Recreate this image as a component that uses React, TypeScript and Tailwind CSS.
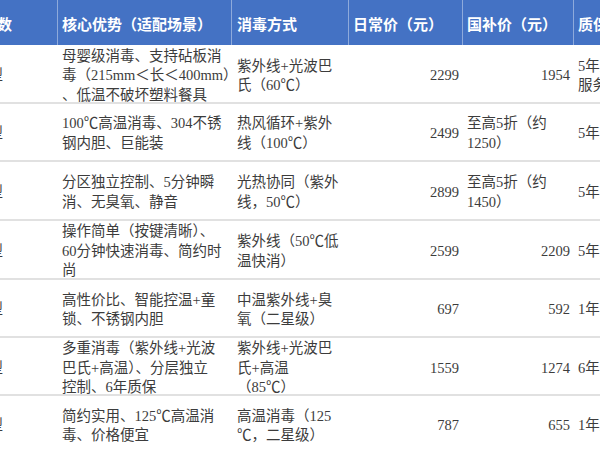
const rows = [
  {
    h: 59,
    pt: 5,
    adv: ['母婴级消毒、支持砧板消', '毒（215mm＜长＜400mm）', '、低温不破坏塑料餐具'],
    mode: ['紫外线+光波巴', '氏（60℃）'],
    daily: '2299',
    sub: '1954',
    warranty: ['5年质保，免费上门', '服务'],
  },
  {
    h: 58,
    pt: 3,
    adv: ['100℃高温消毒、304不锈', '钢内胆、巨能装'],
    mode: ['热风循环+紫外', '线（100℃）'],
    daily: '2499',
    sub: ['至高5折（约', '1250）'],
    warranty: ['5年质保'],
  },
  {
    h: 59,
    pt: 4,
    adv: ['分区独立控制、5分钟瞬', '消、无臭氧、静音'],
    mode: ['光热协同（紫外', '线，50℃）'],
    daily: '2899',
    sub: ['至高5折（约', '1450）'],
    warranty: ['5年质保'],
  },
  {
    h: 59,
    pt: 4,
    adv: ['操作简单（按键清晰）、', '60分钟快速消毒、简约时', '尚'],
    mode: ['紫外线（50℃低', '温快消）'],
    daily: '2599',
    sub: '2209',
    warranty: ['5年质保'],
  },
  {
    h: 58,
    pt: 4,
    adv: ['高性价比、智能控温+童', '锁、不锈钢内胆'],
    mode: ['中温紫外线+臭', '氧（二星级）'],
    daily: '697',
    sub: '592',
    warranty: ['1年质保'],
  },
  {
    h: 58,
    pt: 5,
    adv: ['多重消毒（紫外线+光波', '巴氏+高温）、分层独立', '控制、6年质保'],
    mode: ['紫外线+光波巴', '氏+高温', '（85℃）'],
    daily: '1559',
    sub: '1274',
    warranty: ['6年质保'],
  },
  {
    h: 58,
    pt: 4,
    adv: ['简约实用、125℃高温消', '毒、价格便宜'],
    mode: ['高温消毒（125', '℃，二星级）'],
    daily: '787',
    sub: '655',
    warranty: ['1年质保'],
  },
];

function Lines({ lines }: { lines: string[] }) {
  return (
    <div>
      {lines.map((l, i) => (
        <div key={i} className="whitespace-nowrap">
          {l}
        </div>
      ))}
    </div>
  );
}

export default function App() {
  return (
    <div className="w-[600px] h-[450px] overflow-hidden bg-white font-['Liberation_Serif','Noto_Sans_CJK_SC',serif]">
      <div className="ml-[-60px] w-[760px]">
        <div className="flex h-[45px] bg-[#4472c4] text-white font-bold text-[15px] leading-none">
          <div className="w-[118px] flex items-center pt-[5px] pl-[12px] border-r border-[#8eaadb]">型号参数</div>
          <div className="w-[174px] flex items-center pt-[5px] pl-[4px] border-r border-[#8eaadb]">核心优势（适配场景）</div>
          <div className="w-[117px] flex items-center pt-[5px] pl-[5px] border-r border-[#8eaadb]">消毒方式</div>
          <div className="w-[114px] flex items-center pt-[5px] pl-[4px] border-r border-[#8eaadb]">日常价（元）</div>
          <div className="w-[111px] flex items-center pt-[5px] pl-[4px] border-r border-[#8eaadb]">国补价（元）</div>
          <div className="w-[120px] flex items-center pt-[5px] pl-[4px]">质保服务</div>
        </div>
        {rows.map((r, i) => (
          <div
            key={i}
            className="flex border-b-2 border-[#e1e1e1] text-[14.5px] leading-[19.5px] text-[#3c3c3c]"
            style={{ height: r.h, paddingTop: r.pt }}
          >
            <div className="w-[118px] shrink-0 flex items-center justify-end pr-[55px] whitespace-nowrap">消毒柜型</div>
            <div className="w-[174px] shrink-0 flex items-center pl-[4px]">
              <Lines lines={r.adv} />
            </div>
            <div className="w-[117px] shrink-0 flex items-center pl-[5px]">
              <Lines lines={r.mode} />
            </div>
            <div className="w-[114px] shrink-0 flex items-center justify-end pr-[4px]">{r.daily}</div>
            {typeof r.sub === 'string' ? (
              <div className="w-[111px] shrink-0 flex items-center justify-end pr-[4px]">{r.sub}</div>
            ) : (
              <div className="w-[111px] shrink-0 flex items-center pl-[4px]">
                <Lines lines={r.sub} />
              </div>
            )}
            <div className="w-[120px] shrink-0 flex items-center pl-[4px]">
              <Lines lines={r.warranty} />
            </div>
          </div>
        ))}
      </div>
    </div>
  );
}
